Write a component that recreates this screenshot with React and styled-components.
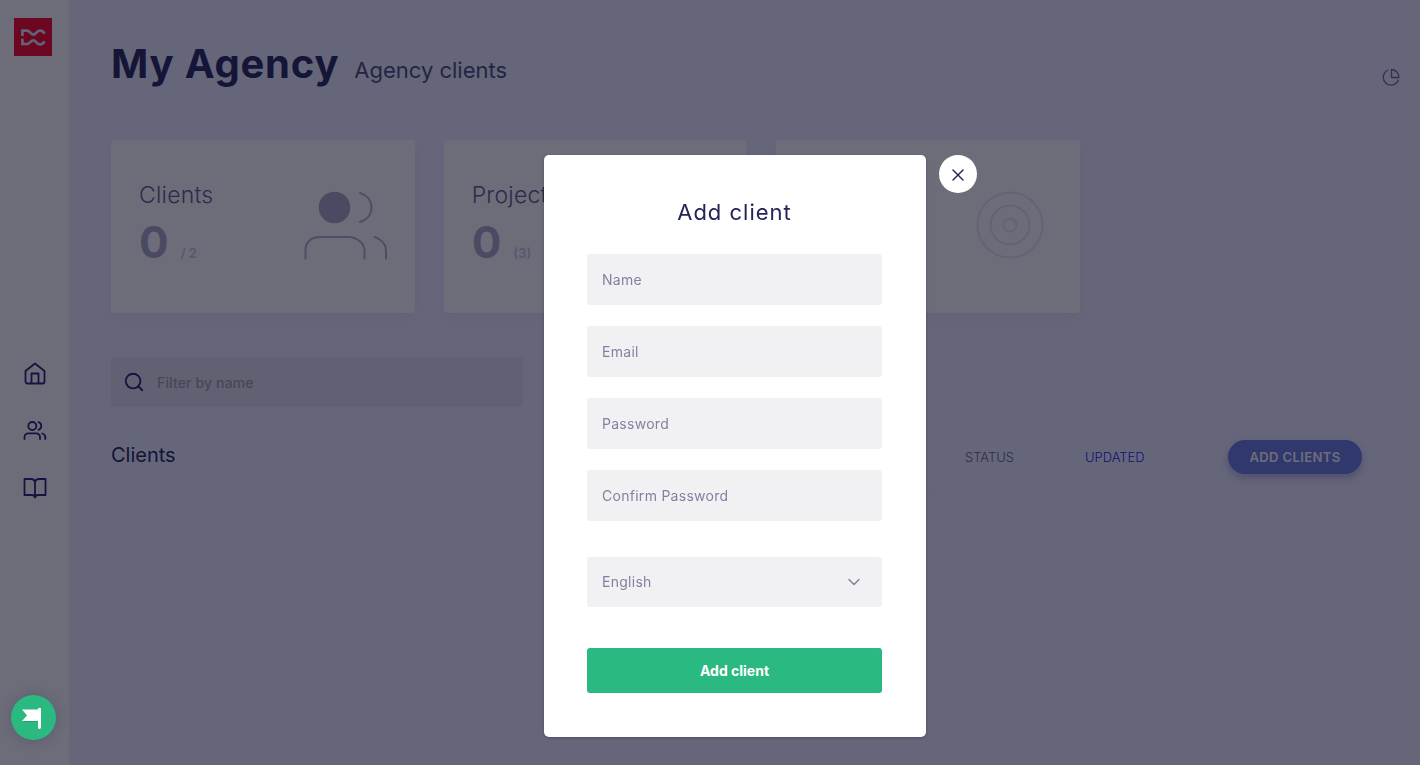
import React from 'react';
import styled, { createGlobalStyle } from 'styled-components';
import { Search, X, ChevronDown } from 'lucide-react';

const GlobalStyle = createGlobalStyle`
  *, *::before, *::after { box-sizing: border-box; }
  body {
    margin: 0;
    background: #eceefd;
    color: #242458;
    font-family: Inter, "Liberation Sans", sans-serif;
    font-size: 14px;
  }
  button, input, select { font: inherit; color: inherit; }
  h1, h2, p { margin: 0; font-weight: 400; }
`;

const Shell = styled.div`
  display: flex;
  height: 100vh;
  overflow: hidden;
`;

const Sidebar = styled.aside`
  display: flex;
  flex-direction: column;
  align-items: center;
  flex: 0 0 69px;
  padding: 18px 3px 24px 0;
  background: #fff;
`;

const LogoLink = styled.a`
  display: block;
  height: 38px;
`;

const Nav = styled.nav`
  display: flex;
  flex: 1;
  flex-direction: column;
  justify-content: center;
  gap: 33px;
  padding: 64px 0 0 3px;
`;

const NavLink = styled.a`
  display: block;
  height: 24px;
  color: #242070;
`;

const Main = styled.main`
  display: flex;
  flex-direction: column;
  flex: 1;
  min-width: 0;
  padding: 40px 8px 0 42px;
`;

const Header = styled.header`
  display: flex;
  align-items: baseline;
  gap: 15px;
  height: 100px;
`;

const PageTitle = styled.h1`
  font-size: 40px;
  line-height: 48px;
  font-weight: 700;
  letter-spacing: 0.02em;
`;

const Subtitle = styled.p`
  flex: 1;
  font-size: 22px;
  line-height: 28px;
  color: #4a4a78;
`;

const UsageButton = styled.button`
  align-self: flex-start;
  height: 18px;
  margin: 28px 12px 0 0;
  padding: 0;
  border: 0;
  background: none;
  color: #6a6a98;
`;

const Cards = styled.section`
  display: grid;
  grid-template-columns: repeat(3, 1fr);
  gap: 29px;
  max-width: 969px;
`;

const Card = styled.article`
  display: flex;
  justify-content: space-between;
  height: 173px;
  padding: 40px 28px 0;
  border-radius: 4px;
  background: #fff;
  box-shadow: 0 4px 12px rgba(60, 60, 140, 0.06);
`;

const CardArt = styled.svg`
  flex: none;
  margin-top: ${(p) => p.$top}px;
  margin-right: ${(p) => p.$right}px;
`;

const CardTitle = styled.h2`
  font-size: 23px;
  line-height: 30px;
  font-weight: 300;
  color: #5c5a88;
  letter-spacing: 0.01em;
`;

const Figure = styled.p`
  display: flex;
  align-items: baseline;
  gap: 12px;
  font-size: 44px;
  line-height: 64px;
  font-weight: 700;
  color: #a9abc6;
`;

const Limit = styled.span`
  font-size: 13px;
  font-weight: 600;
  color: #c8c8dc;
`;

const Filter = styled.label`
  display: flex;
  align-items: center;
  gap: 10px;
  flex: none;
  width: 412px;
  height: 50px;
  margin-top: 44px;
  padding: 0 12px;
  border-radius: 4px;
  background: #e1e2ee;
  color: #242070;
`;

const FilterInput = styled.input`
  flex: 1;
  min-width: 0;
  border: 0;
  outline: 0;
  background: none;
  font-weight: 500;
  letter-spacing: 0.01em;
  &::placeholder { color: #a0a0a8; opacity: 1; }
`;

const ListHead = styled.div`
  display: flex;
  align-items: center;
  height: 34px;
  margin-top: 33px;
  padding-right: 50px;
`;

const ListTitle = styled.h2`
  flex: 1;
  font-size: 20px;
  line-height: 28px;
  padding-bottom: 4px;
`;

const SortButton = styled.button`
  width: ${(p) => p.$width}px;
  padding: 0;
  border: 0;
  background: none;
  text-align: left;
  font-size: 13px;
  font-weight: 300;
  color: ${(p) => (p.$active ? '#2414f8' : '#5e5e80')};
`;

const AddButton = styled.button`
  width: 134px;
  height: 34px;
  border: 0;
  border-radius: 17px;
  background: #6a7ae0;
  color: #fff;
  font-size: 13px;
  font-weight: 600;
  letter-spacing: 0.03em;
  box-shadow: 0 4px 8px rgba(90, 80, 190, 0.4);
`;

const ListPanel = styled.section`
  flex: 1;
  margin-top: 16px;
  border: 1px solid #e8eaf8;
  border-bottom: 0;
  border-radius: 4px 4px 0 0;
`;

const Overlay = styled.div`
  position: fixed;
  inset: 0;
  display: flex;
  justify-content: center;
  align-items: flex-start;
  padding: 155px 0 28px 50px;
  background: rgba(12, 12, 34, 0.6);
`;

const Dialog = styled.div`
  position: relative;
  width: 382px;
  padding: 42px 44px 44px 43px;
  border-radius: 5px;
  background: #fff;
  box-shadow: 0 1px 3px rgba(20, 16, 50, 0.3);
`;

const CloseButton = styled.button`
  position: absolute;
  top: 0;
  right: -51px;
  display: flex;
  align-items: center;
  justify-content: center;
  width: 38px;
  height: 38px;
  padding: 2px 0 0;
  border: 0;
  border-radius: 50%;
  background: #fff;
`;

const DialogTitle = styled.h2`
  margin-bottom: 27px;
  font-size: 22px;
  line-height: 30px;
  letter-spacing: 1px;
  text-align: center;
`;

const Form = styled.form`
  display: flex;
  flex-direction: column;
`;

const Field = styled.input`
  height: 51px;
  margin-bottom: 21px;
  padding: 0 15px 1px;
  border: 0;
  border-radius: 3px;
  background: #f1f1f4;
  letter-spacing: 0.02em;
  &::placeholder { color: #84819f; opacity: 1; }
`;

const SelectBox = styled.div`
  position: relative;
  margin: 15px 0 41px;
  color: #84819f;
  svg {
    position: absolute;
    top: 15px;
    right: 18px;
    pointer-events: none;
  }
`;

const Select = styled.select`
  display: block;
  width: 100%;
  height: 50px;
  padding: 0 15px 1px;
  border: 0;
  border-radius: 3px;
  background: #f1f1f4;
  appearance: none;
  letter-spacing: 0.02em;
`;

const SubmitButton = styled.button`
  height: 45px;
  border: 0;
  border-radius: 3px;
  background: #2aba81;
  color: #fff;
  font-weight: 700;
`;

const HelpButton = styled.button`
  position: fixed;
  left: 11px;
  bottom: 25px;
  width: 45px;
  height: 45px;
  padding: 0;
  border: 0;
  border-radius: 50%;
  background: #2aba81;
  box-shadow: 0 1px 14px rgba(20, 16, 50, 0.2);
  svg { display: block; }
`;

const fields = [
  { label: 'Name', type: 'text' },
  { label: 'Email', type: 'email' },
  { label: 'Password', type: 'password' },
  { label: 'Confirm Password', type: 'password' },
];

function Logo() {
  return (
    <svg width="38" height="38" viewBox="0 0 38 38" aria-hidden="true">
      <rect width="38" height="38" fill="#ff0022" />
      <g fill="none" stroke="#dfe3f4" strokeWidth="2.7">
        <path d="M8.400 18V12.700H13C16 12.700 16.500 16.600 19.400 16.600S22 12.600 26 12.600C28 12.600 29.500 13.500 30.500 15.800" />
        <path d="M8.400 20.800V26H13C16 26 16.500 22.400 19.400 22.400S22 26.300 26 26.300C28 26.300 29.500 25.500 30.500 23.200" />
      </g>
    </svg>
  );
}

function ClientsArt() {
  return (
    <CardArt width="84" height="70" viewBox="0 0 84 70" $top={10} $right={0} fill="none" stroke="#b2aec6" strokeWidth="2" strokeLinecap="round">
      <circle cx="31.500" cy="17.500" r="15.800" fill="#a9abc6" stroke="none" />
      <path d="M57 3C64 5 68.500 10.500 68.500 17.500S64 30 57 32" />
      <path d="M2.500 68.500V60C2.500 52 8.500 47 17 47H45C54 47 61.500 53 61.500 61V68.500" />
      <path d="M71.500 47C78 49 83 54 83 61V68.500" />
    </CardArt>
  );
}

function TargetArt() {
  return (
    <CardArt width="68" height="68" viewBox="0 0 68 68" $top={11} $right={8} fill="none" stroke="#e6e5f0" strokeWidth="2">
      <circle cx="34" cy="34" r="32.500" />
      <circle cx="34" cy="34" r="19.500" />
      <circle cx="34" cy="34" r="6.500" />
    </CardArt>
  );
}

function Stat({ title, value, limit, children }) {
  return (
    <Card>
      <div>
        <CardTitle>{title}</CardTitle>
        <Figure>
          {value}
          <Limit>{limit}</Limit>
        </Figure>
      </div>
      {children}
    </Card>
  );
}

export default function App() {
  return (
    <>
      <GlobalStyle />
      <Shell>
        <Sidebar>
          <LogoLink href="#" aria-label="Home page"><Logo /></LogoLink>
          <Nav>
            <NavLink href="#" aria-label="Home">
              <svg width="24" height="24" viewBox="0 0 24 24" fill="none" stroke="currentColor" strokeWidth="1.8" strokeLinejoin="round">
                <path d="M2.500 9L12 1.500L21.500 9V19.500A2 2 0 0 1 19.500 21.500H4.500A2 2 0 0 1 2.500 19.500Z" />
                <path d="M8.500 21.500V11.500H15.500V21.500" />
              </svg>
            </NavLink>
            <NavLink href="#" aria-label="Clients">
              <svg width="24" height="24" viewBox="0 0 24 24" fill="none" stroke="currentColor" strokeWidth="1.800" strokeLinecap="round">
                <circle cx="9.300" cy="7" r="4" />
                <path d="M15.500 3.200A4 4 0 0 1 15.500 10.800" />
                <path d="M1.500 20V18A4 4 0 0 1 5.500 14.300H13A4 4 0 0 1 17 18V20" />
                <path d="M19.300 14.500A4 4 0 0 1 22.300 18.300V20" />
              </svg>
            </NavLink>
            <NavLink href="#" aria-label="Guides">
              <svg width="24" height="24" viewBox="0 0 24 24" fill="none" stroke="currentColor" strokeWidth="1.800" strokeLinejoin="round">
                <path d="M1.500 3H8A4 4 0 0 1 12 6.500A4 4 0 0 1 16 3H22.500V19H15A3 3 0 0 0 12 21.500A3 3 0 0 0 9 19H1.500Z" />
                <path d="M12 6.500V21.500" />
              </svg>
            </NavLink>
          </Nav>
        </Sidebar>
        <Main>
          <Header>
            <PageTitle>My Agency</PageTitle>
            <Subtitle>Agency clients</Subtitle>
            <UsageButton aria-label="Usage">
              <svg width="18" height="18" viewBox="0 0 18 18" fill="none" stroke="currentColor" strokeWidth="1.300" strokeLinejoin="round">
                <path d="M9.500 1.500V9.500H17A8 8 0 0 0 9.500 1.500Z" />
                <path d="M6.500 2A7.800 7.800 0 1 0 16.500 11.800" />
              </svg>
            </UsageButton>
          </Header>
          <Cards>
            <Stat title="Clients" value="0" limit="/ 2"><ClientsArt /></Stat>
            <Stat title="Projects" value="0" limit="(3)" />
            <Stat title="Keywords" value="0" limit="/ 250"><TargetArt /></Stat>
          </Cards>
          <Filter>
            <Search size={22} strokeWidth={2} />
            <FilterInput placeholder="Filter by name" aria-label="Filter by name" />
          </Filter>
          <ListHead>
            <ListTitle>Clients</ListTitle>
            <SortButton $width={120}>STATUS</SortButton>
            <SortButton $width={143} $active>UPDATED</SortButton>
            <AddButton>ADD CLIENTS</AddButton>
          </ListHead>
          <ListPanel />
        </Main>
      </Shell>
      <Overlay>
        <Dialog role="dialog" aria-modal="true" aria-labelledby="dialog-title">
          <DialogTitle id="dialog-title">Add client</DialogTitle>
          <Form>
            {fields.map((f) => (
              <Field key={f.label} type={f.type} placeholder={f.label} aria-label={f.label} />
            ))}
            <SelectBox>
              <Select aria-label="Language" defaultValue="English">
                <option>English</option>
              </Select>
              <ChevronDown size={20} strokeWidth={1.8} />
            </SelectBox>
            <SubmitButton type="button">Add client</SubmitButton>
          </Form>
          <CloseButton aria-label="Close"><X size={20} strokeWidth={1.7} /></CloseButton>
        </Dialog>
      </Overlay>
      <HelpButton aria-label="Help">
        <svg width="45" height="45" viewBox="0 0 45 45" aria-hidden="true">
          <path d="M11 16.500L15.500 21.500L11 27H26V15.500H11Z" fill="#0f7f55" opacity=".4" transform="translate(1 0)" />
          <path d="M11 14.500H27V13.500Q28.500 12 30 13.500V33Q28.500 35 27 33V26H11L16 20.500Z" fill="#fff" />
        </svg>
      </HelpButton>
    </>
  );
}
